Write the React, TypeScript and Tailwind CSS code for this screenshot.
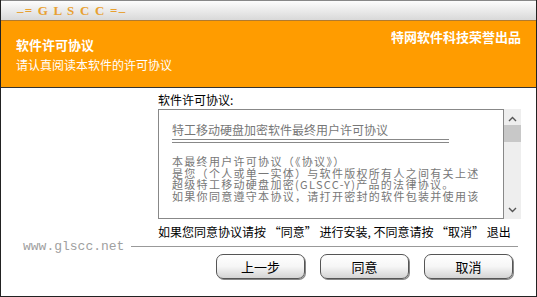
import React from "react";

const cjk = { fontFamily: '"Noto Sans CJK SC", "Noto Sans", sans-serif' };

function Btn({ label }: { label: string }) {
  return (
    <div className="w-[89px] h-[25px] rounded-[7px] border border-[#555] bg-gradient-to-b from-white via-[#f6f6f6] to-[#d4d4d4] shadow-[1px_1px_0_#888] flex items-center justify-center text-[13px] text-black leading-none">
      {label}
    </div>
  );
}

export default function App() {
  return (
    <div className="w-[537px] h-[297px] bg-white overflow-hidden" style={cjk}>
      <div className="w-[537px] h-[297px] flex flex-col border-l border-r border-b border-[#222]">
        <div className="h-[21px] border-t border-[#888] border-b border-b-[#b07a30] bg-gradient-to-b from-[#fdfdfd] to-[#d9d9d9] flex items-center pl-[16px]">
          <span className="text-[13px] font-bold text-[#e8a030] tracking-[1.2px] leading-none whitespace-pre" style={{ fontFamily: '"Liberation Serif", serif' }}>
            –= G L S C C =–
          </span>
        </div>
        <div className="h-[67px] bg-[#ff9c00] border-b border-[#333] flex justify-between items-start">
          <div className="pl-[15px] pt-[16px] text-white">
            <div className="text-[13px] font-bold leading-[16px]">软件许可协议</div>
            <div className="text-[12px] leading-[16px] mt-[4px]">请认真阅读本软件的许可协议</div>
          </div>
          <div className="pr-[15px] pt-[8px] text-white text-[13px] font-bold leading-[16px]">特网软件科技荣誉出品</div>
        </div>
        <div className="flex flex-col">
          <div className="ml-[157px] mt-[4px] text-[12px] leading-[16px] text-black">软件许可协议:</div>
          <div className="ml-[157px] mt-[1px] w-[363px] h-[110px] flex">
            <div className="flex-1 border border-[#888] pl-[13px] pt-[12px] overflow-hidden text-[#777]">
              <div className="text-[12px] leading-[16px]">特工移动硬盘加密软件最终用户许可协议</div>
              <div className="w-[277px] h-[4px] border-t border-b border-[#888] mt-[1px]" />
              <div className="mt-[13px] text-[11px] leading-[11.5px] tracking-[1.3px] whitespace-nowrap">
                <div>本最终用户许可协议（《协议》）</div>
                <div>是您（个人或单一实体）与软件版权所有人之间有关上述</div>
                <div>超级特工移动硬盘加密(GLSCC-Y)产品的法律协议。</div>
                <div>如果你同意遵守本协议，请打开密封的软件包装并使用该</div>
              </div>
            </div>
            <div className="w-[17px] bg-[#eeeeee] flex flex-col items-center">
              <svg width="9" height="6" viewBox="0 0 9 6" className="mt-[7px]">
                <path d="M1 5 L4.5 1.5 L8 5" fill="none" stroke="#555" strokeWidth="1.4" />
              </svg>
              <div className="w-[17px] h-[17px] bg-[#c8c8c8] mt-[3px]" />
              <div className="flex-1" />
              <svg width="9" height="6" viewBox="0 0 9 6" className="mb-[6px]">
                <path d="M1 1 L4.5 4.5 L8 1" fill="none" stroke="#555" strokeWidth="1.4" />
              </svg>
            </div>
          </div>
          <div className="ml-[157px] mt-[5px] text-[12px] leading-[16px] text-black whitespace-nowrap">
            如果您同意协议请按 “同意” 进行安装, 不同意请按 “取消” 退出
          </div>
          <div className="flex items-center h-[12px] pl-[22px]">
            <span className="text-[13px] leading-none text-[#a0a0a0]" style={{ fontFamily: '"Liberation Mono", monospace' }}>
              www.glscc.net
            </span>
            <div className="ml-[7px] w-[387px] h-px bg-[#999]" />
          </div>
          <div className="flex gap-[15px] ml-[215px] mt-[2px]">
            <Btn label="上一步" />
            <Btn label="同意" />
            <Btn label="取消" />
          </div>
        </div>
      </div>
    </div>
  );
}
